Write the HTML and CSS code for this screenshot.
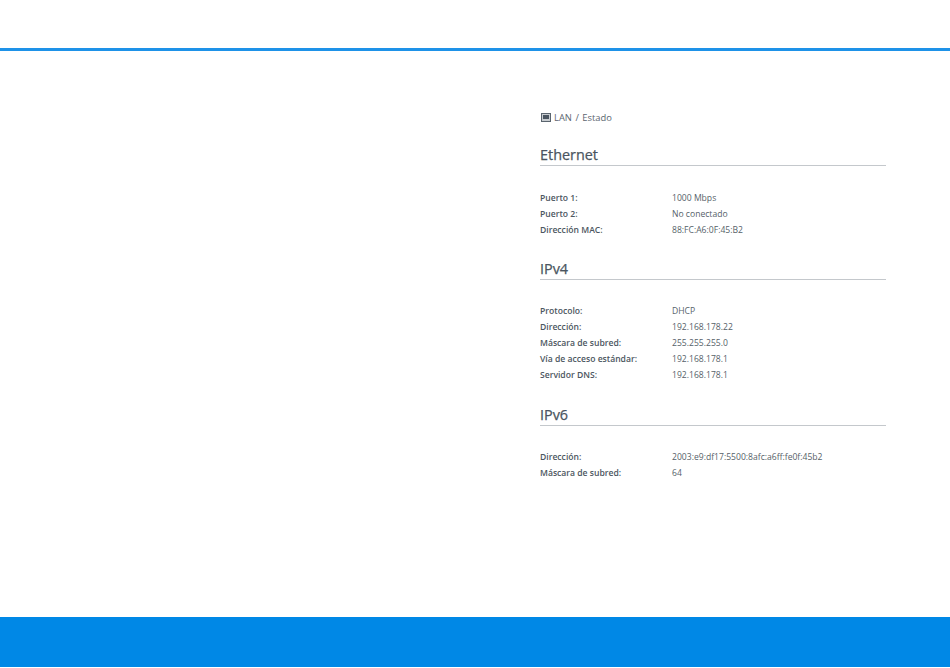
FILE: index.html
```html
<!DOCTYPE html>
<html lang="es">
<head>
    <meta charset="UTF-8">
    <title>LAN / Estado</title>
    <link rel="stylesheet" href="styles.css">
</head>
<body>
    <div class="top-bar"></div>

    <div class="content">
        <div class="column">
            <div class="breadcrumb">
                <svg class="lan-icon" width="10" height="9" viewBox="0 0 10 9">
                    <rect x="0.5" y="0.5" width="9" height="8" fill="#c8ccd0" stroke="#5a646e"/>
                    <rect x="2" y="2" width="6" height="4" fill="#4a5560"/>
                </svg>
                <span>LAN</span>
                <span class="sep">/</span>
                <span>Estado</span>
            </div>

            <h2>Ethernet</h2>
            <div class="rows rows-first">
                <div class="row"><span class="label">Puerto 1:</span><span>1000 Mbps</span></div>
                <div class="row"><span class="label">Puerto 2:</span><span>No conectado</span></div>
                <div class="row"><span class="label">Dirección MAC:</span><span>88:FC:A6:0F:45:B2</span></div>
            </div>

            <h2>IPv4</h2>
            <div class="rows">
                <div class="row"><span class="label">Protocolo:</span><span>DHCP</span></div>
                <div class="row"><span class="label">Dirección:</span><span>192.168.178.22</span></div>
                <div class="row"><span class="label">Máscara de subred:</span><span>255.255.255.0</span></div>
                <div class="row"><span class="label">Vía de acceso estándar:</span><span>192.168.178.1</span></div>
                <div class="row"><span class="label">Servidor DNS:</span><span>192.168.178.1</span></div>
            </div>

            <h2>IPv6</h2>
            <div class="rows">
                <div class="row"><span class="label">Dirección:</span><span>2003:e9:df17:5500:8afc:a6ff:fe0f:45b2</span></div>
                <div class="row"><span class="label">Máscara de subred:</span><span>64</span></div>
            </div>
        </div>
    </div>

    <div class="bottom-bar"></div>
</body>
</html>
```

FILE: styles.css
```css
/* Global Styles */
html,
body {
    height: 100%;
}

body {
    margin: 0;
    display: flex;
    flex-direction: column;
    font-family: "Open Sans", sans-serif;
    font-size: 8.6px;
    color: #565f69;
    background-color: white;
    overflow: hidden;
}

/* Bars */
.top-bar {
    height: 3px;
    margin-top: 48px;
    background-color: #1e92e8;
}

.bottom-bar {
    height: 50px;
    margin-bottom: 1px;
    background-color: #0088e6;
}

/* Content */
.content {
    flex: 1;
    display: flex;
    justify-content: flex-end;
    padding-right: 64px;
}

.column {
    width: 346px;
    padding-top: 59px;
}

.breadcrumb {
    display: flex;
    align-items: center;
    height: 14px;
    margin-left: 1px;
    font-size: 9.4px;
    color: #5c6670;
}

.lan-icon {
    margin-right: 3px;
}

.sep {
    margin: 0 3.5px;
}

h2 {
    margin: 0;
    height: 20px;
    font-size: 14.4px;
    font-weight: 400;
    -webkit-text-stroke: 0.25px #4a5560;
    line-height: 20px;
    color: #4a5560;
    border-bottom: 1px solid #c4c8cc;
}

.breadcrumb + h2 {
    margin-top: 21px;
}

.rows {
    padding: 23px 0 22px;
}

.rows-first {
    padding: 24px 0 21px;
}

.row {
    display: flex;
    height: 16px;
    line-height: 16px;
}

.label {
    width: 132px;
    font-weight: 600;
    color: #4c5660;
}
```
